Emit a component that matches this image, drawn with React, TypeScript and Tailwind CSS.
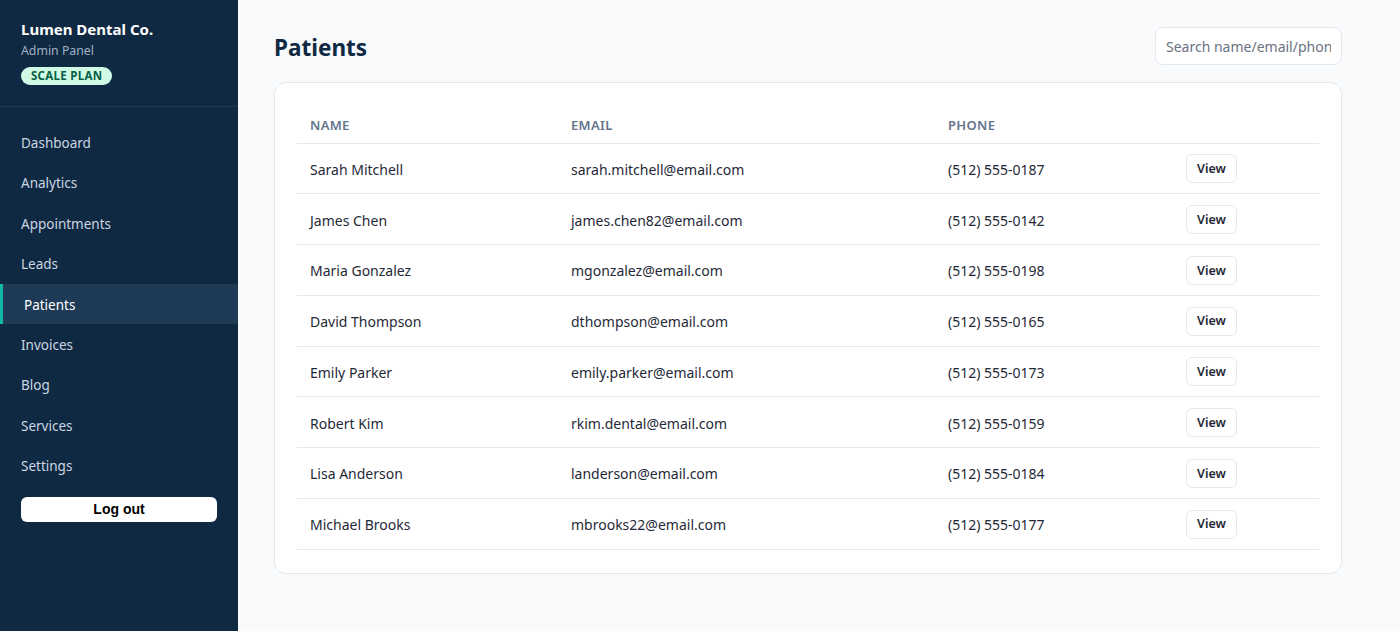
import React from 'react';

type Patient = {
  name: string;
  email: string;
  phone: string;
};

const patients: Patient[] = [
  { name: 'Sarah Mitchell', email: 'sarah.mitchell@email.com', phone: '(512) 555-0187' },
  { name: 'James Chen', email: 'james.chen82@email.com', phone: '(512) 555-0142' },
  { name: 'Maria Gonzalez', email: 'mgonzalez@email.com', phone: '(512) 555-0198' },
  { name: 'David Thompson', email: 'dthompson@email.com', phone: '(512) 555-0165' },
  { name: 'Emily Parker', email: 'emily.parker@email.com', phone: '(512) 555-0173' },
  { name: 'Robert Kim', email: 'rkim.dental@email.com', phone: '(512) 555-0159' },
  { name: 'Lisa Anderson', email: 'landerson@email.com', phone: '(512) 555-0184' },
  { name: 'Michael Brooks', email: 'mbrooks22@email.com', phone: '(512) 555-0177' },
];

const navItems = ['Dashboard', 'Analytics', 'Appointments', 'Leads', 'Patients', 'Invoices', 'Blog', 'Services', 'Settings'];

export default function App() {
  const active = 'Patients';

  return (
    <div className="flex min-h-[631px] font-['Noto_Sans',sans-serif] bg-[#f8fafc]">
      {/* Sidebar */}
      <aside className="w-[238px] shrink-0 bg-[#0f2942] text-white">
        <div className="px-[21px] pt-[19px] pb-[20px] border-b border-[#1f3a56]">
          <div className="text-[15px] font-bold leading-[21px]">Lumen Dental Co.</div>
          <div className="text-[12.3px] leading-[22px] text-[#9fb1c6]">Admin Panel</div>
          <span className="inline-block mt-[4px] rounded-full bg-[#d1fae5] px-[10px] text-[11.5px] font-bold leading-[18px] tracking-wide text-[#065f46]">
            SCALE PLAN
          </span>
        </div>
        <nav className="pt-[15px]">
          {navItems.map((item) => (
            <div
              key={item}
              className={
                item === active
                  ? 'h-[40.4px] flex items-center pt-[2px] pl-[21px] border-l-[3px] border-[#14b8a6] bg-[#1e3a56] text-[13.5px] text-white'
                  : 'h-[40.4px] flex items-center pt-[2px] pl-[21px] text-[13.5px] text-[#cbd6e2]'
              }
            >
              {item}
            </div>
          ))}
        </nav>
        <div className="px-[21px] pt-[10px]">
          <button className="w-full h-[25px] rounded-md bg-white text-[14px] font-bold text-black font-['Liberation_Sans',Arial,sans-serif]">
            Log out
          </button>
        </div>
      </aside>

      {/* Main */}
      <main className="flex-1 pl-[36px] pr-[58px] pt-[27px]">
        <div className="flex items-center justify-between">
          <h1 className="pt-[3px] text-[22.5px] font-bold text-[#0f2942]">Patients</h1>
          <input
            type="text"
            placeholder="Search name/email/phone"
            className="w-[187px] h-[38px] rounded-lg border border-[#e2e8f0] bg-white px-[10px] text-[14px] placeholder:text-[#6b7280] outline-none"
          />
        </div>

        <div className="mt-[17px] rounded-xl border border-[#e2e8f0] bg-white px-[22px] pt-[22px] pb-[23px]">
          <table className="w-full border-collapse text-left">
            <thead>
              <tr className="border-b border-[#e5e7eb]">
                <th className="w-[261px] h-[38px] pt-[4px] pl-[13px] text-[13px] font-semibold tracking-wide text-[#64748b]">NAME</th>
                <th className="w-[377px] pt-[4px] pl-[13px] text-[13px] font-semibold tracking-wide text-[#64748b]">EMAIL</th>
                <th className="w-[238px] pt-[4px] pl-[13px] text-[13px] font-semibold tracking-wide text-[#64748b]">PHONE</th>
                <th></th>
              </tr>
            </thead>
            <tbody>
              {patients.map((p) => (
                <tr key={p.email} className="border-b border-[#e5e7eb]">
                  <td className="h-[50.75px] pt-[2px] pl-[13px] text-[14px] text-[#1f2937]">{p.name}</td>
                  <td className="pt-[2px] pl-[13px] text-[14px] text-[#1f2937]">{p.email}</td>
                  <td className="pt-[2px] pl-[13px] text-[14px] text-[#1f2937]">{p.phone}</td>
                  <td className="pt-[1px] pl-[13px]">
                    <button className="h-[29px] px-[10px] pt-[1px] rounded-md border border-[#e5e7eb] bg-white text-[12.5px] font-semibold text-[#1f2937]">
                      View
                    </button>
                  </td>
                </tr>
              ))}
            </tbody>
          </table>
        </div>
      </main>
    </div>
  );
}
